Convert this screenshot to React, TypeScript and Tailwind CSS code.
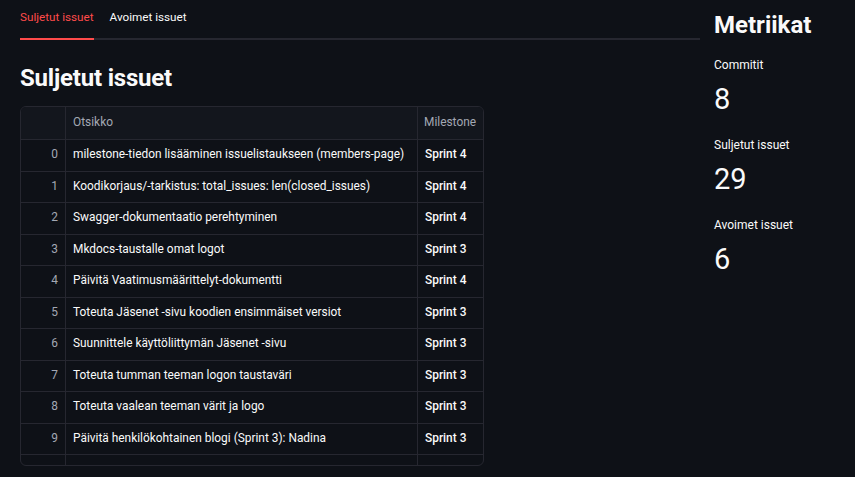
import React from "react";

const rows: [string, string][] = [
  ["milestone-tiedon lisääminen issuelistaukseen (members-page)", "Sprint 4"],
  ["Koodikorjaus/-tarkistus: total_issues: len(closed_issues)", "Sprint 4"],
  ["Swagger-dokumentaatio perehtyminen", "Sprint 4"],
  ["Mkdocs-taustalle omat logot", "Sprint 3"],
  ["Päivitä Vaatimusmäärittelyt-dokumentti", "Sprint 4"],
  ["Toteuta Jäsenet -sivu koodien ensimmäiset versiot", "Sprint 3"],
  ["Suunnittele käyttöliittymän Jäsenet -sivu", "Sprint 3"],
  ["Toteuta tumman teeman logon taustaväri", "Sprint 3"],
  ["Toteuta vaalean teeman värit ja logo", "Sprint 3"],
  ["Päivitä henkilökohtainen blogi (Sprint 3): Nadina", "Sprint 3"],
];

export default function App() {
  return (
    <div
      className="min-h-screen w-full bg-[#0e1117] text-[#fafafa] flex px-[20px] gap-[14px]"
      style={{ fontFamily: "Roboto, 'Noto Sans', sans-serif" }}
    >
      <div className="w-[680px] shrink-0">
        <div className="flex gap-[16px] border-b-2 border-[#262730] h-[40px] items-stretch">
          <div className="relative flex items-center text-[11.7px] text-[#ff4b4b] pb-[2px]">
            Suljetut issuet
            <div className="absolute left-0 right-0 bottom-[-2px] h-[2px] bg-[#ff4b4b]" />
          </div>
          <div className="flex items-center text-[11.7px] text-[#fafafa] pb-[2px]">Avoimet issuet</div>
        </div>
        <h2 className="mt-[22px] text-[24px] font-bold leading-[32px] tracking-[-0.2px]">Suljetut issuet</h2>
        <div className="mt-[12px] w-[464px] border border-[#262730] rounded-[6px] overflow-hidden text-[11.9px]">
          <div className="flex h-[33px] bg-[#13161d] border-b border-[#262730] text-[#a3a8b4]">
            <div className="w-[45px] border-r border-[#262730]" />
            <div className="w-[352px] border-r border-[#262730] flex items-center pl-[7px]">Otsikko</div>
            <div className="flex-1 flex items-center pl-[6px]">Milestone</div>
          </div>
          {rows.map(([t, m], i) => (
            <div key={i} className="flex h-[31.5px] border-b border-[#262730]">
              <div className="w-[45px] border-r border-[#262730] flex items-center justify-end pr-[7px] text-[#a3a8b4]">{i}</div>
              <div className="w-[352px] border-r border-[#262730] flex items-center pl-[7px] whitespace-nowrap">{t}</div>
              <div className="flex-1 flex items-center pl-[7px] font-medium">{m}</div>
            </div>
          ))}
          <div className="flex h-[10px]">
            <div className="w-[45px] border-r border-[#262730]" />
            <div className="w-[352px] border-r border-[#262730]" />
            <div className="flex-1" />
          </div>
        </div>
      </div>
      <div className="pt-[10px]">
        <div className="text-[24px] font-bold leading-[30px]">Metriikat</div>
        <div className="mt-[17px] text-[12px] leading-[16px]">Commitit</div>
        <div className="mt-[8px] text-[29px] leading-[36px]">8</div>
        <div className="mt-[20px] text-[12px] leading-[16px]">Suljetut issuet</div>
        <div className="mt-[8px] text-[29px] leading-[36px]">29</div>
        <div className="mt-[20px] text-[12px] leading-[16px]">Avoimet issuet</div>
        <div className="mt-[8px] text-[29px] leading-[36px]">6</div>
      </div>
    </div>
  );
}
